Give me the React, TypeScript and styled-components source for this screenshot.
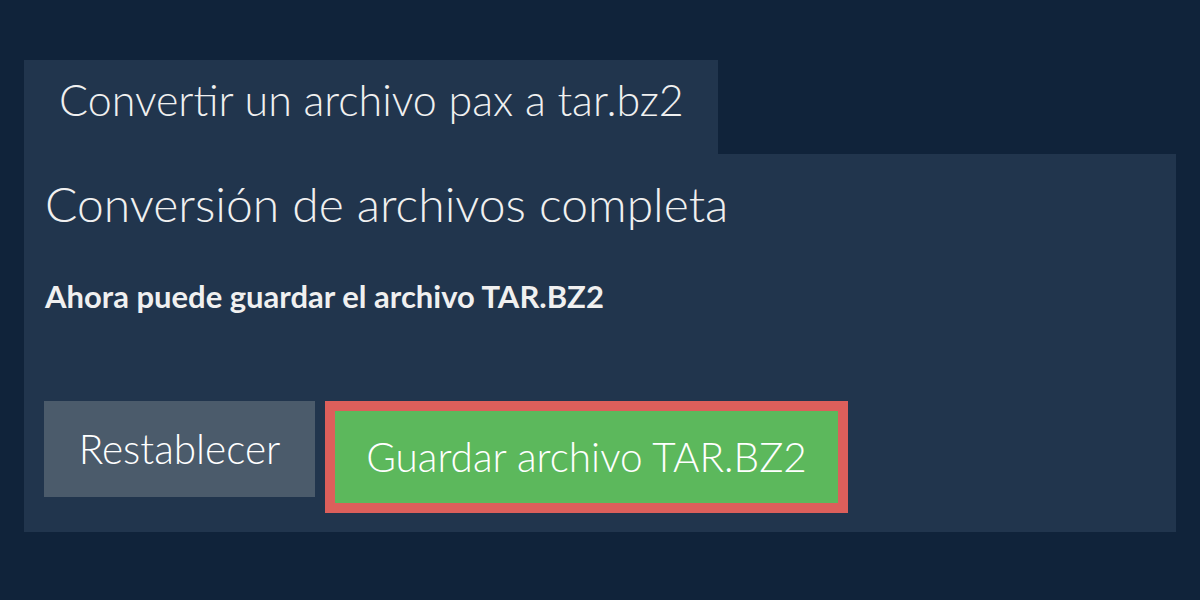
import styled, { createGlobalStyle } from "styled-components";

// Global
const GlobalStyle = createGlobalStyle`
  html, body {
    margin: 0;
    padding: 0;
    background-color: #10233a;
    font-family: "Lato", "Liberation Sans", sans-serif;
  }
`;

const App = () => {
  return (
    <>
      <GlobalStyle />
      <Page>
        <Tab>Convertir un archivo pax a tar.bz2</Tab>
        <Panel>
          <Heading>Conversión de archivos completa</Heading>
          <Message>Ahora puede guardar el archivo TAR.BZ2</Message>
          <Actions>
            <ResetButton type="button">Restablecer</ResetButton>
            <SaveButton type="button">Guardar archivo TAR.BZ2</SaveButton>
          </Actions>
        </Panel>
      </Page>
    </>
  );
};

// Styles
const lightFont = `"Lato Light", "Lato", "Liberation Sans", sans-serif`;

const Page = styled.div`
  display: flex;
  flex-direction: column;
  align-items: flex-start;
  padding: 60px 24px 0;
  height: 600px;
  box-sizing: border-box;
`;

const Tab = styled.div`
  display: flex;
  align-items: center;
  box-sizing: border-box;
  width: 694px;
  height: 94px;
  padding: 0 0 14px 35px;
  background-color: #21354d;
  color: #f0f0f0;
  font-family: ${lightFont};
  font-size: 43px;
  font-weight: 300;
  line-height: 52px;
`;

const Panel = styled.div`
  align-self: stretch;
  box-sizing: border-box;
  height: 378px;
  padding: 22px 20px 0 21px;
  background-color: #21354d;
  color: #f0f0f0;
`;

const Heading = styled.h1`
  margin: 0;
  font-family: ${lightFont};
  font-size: 48px;
  font-weight: 300;
  line-height: 56px;
`;

const Message = styled.p`
  margin: 46px 0 0;
  font-size: 31px;
  font-weight: 700;
  line-height: 36px;
`;

const Actions = styled.div`
  display: flex;
  align-items: flex-start;
  gap: 10px;
  margin-top: 87px;
  margin-left: -1px;
`;

const ButtonBase = styled.button`
  box-sizing: border-box;
  border: none;
  margin: 0;
  padding: 0;
  color: #ffffff;
  font-family: ${lightFont};
  font-size: 40.5px;
  font-weight: 300;
  line-height: 50px;
  cursor: pointer;
`;

const ResetButton = styled(ButtonBase)`
  width: 271px;
  height: 96px;
  background-color: #4b5b6b;
`;

const SaveButton = styled(ButtonBase)`
  width: 523px;
  height: 112px;
  border: 10px solid #dc5f5b;
  background-color: #5cb85c;
`;

// Exports
export default App;
